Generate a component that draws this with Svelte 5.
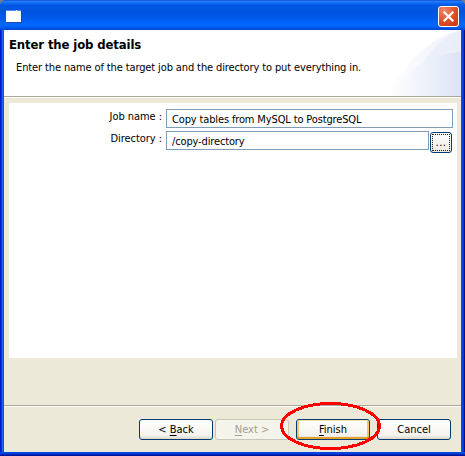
<script>
  let jobName = $state('Copy tables from MySQL to PostgreSQL');
  let directory = $state('/copy-directory');
</script>

<div class="window">
  <div class="titlebar">
    <svg class="app" width="16" height="13" viewBox="0 0 16 13">
      <rect x="1" y="1" width="15" height="12" fill="#1c3f91" opacity=".65" />
      <rect width="15" height="12" fill="#fff" />
      <rect width="15" height="1" fill="#3e91ff" />
      <rect x="10" width="1" height="1" fill="#fff" /><rect x="13" width="1" height="1" fill="#e87850" />
    </svg>
    <button class="close" aria-label="Close">
      <svg width="21" height="21" viewBox="0 0 21 21">
        <defs><radialGradient id="red" cx=".3" cy=".2" r="1"><stop stop-color="#ef8869" /><stop offset=".55" stop-color="#df4d27" /><stop offset="1" stop-color="#c33811" /></radialGradient></defs>
        <rect x=".5" y=".5" width="20" height="20" rx="2.5" fill="url(#red)" stroke="#fff" />
        <path d="M5.7 5.7L15.3 15.3M15.3 5.7L5.7 15.3" stroke="#fff" stroke-width="2.2" />
      </svg>
    </button>
  </div>
  <div class="body">
    <header>
      <div class="heading">
        <h1>Enter the job details</h1>
        <p>Enter the name of the target job and the directory to put everything in.</p>
      </div>
      <svg class="banner" width="77" height="66" viewBox="0 0 77 66">
        <defs>
          <linearGradient id="arc1" x1="0" x2="1"><stop stop-color="#fff" /><stop offset=".4" stop-color="#f8f9fd" /><stop offset="1" stop-color="#eef1fa" /></linearGradient>
          <linearGradient id="arc2" x1="0" x2="1"><stop stop-color="#fff" /><stop offset=".4" stop-color="#f1f4fb" /><stop offset="1" stop-color="#dce3f5" /></linearGradient>
        </defs>
        <path d="M3 66C20 34 43 9 77 0V66Z" fill="url(#arc1)" />
        <path d="M38 36C46 20 60 5 77 1V22C61 24 48 29 38 36Z" fill="#e8edf8" opacity=".7" />
        <path d="M6 66C20 42 46 23 77 22V66Z" fill="url(#arc2)" />
      </svg>
    </header>
    <div class="rule"></div>
    <main>
      <div class="row">
        <label for="job">Job name :</label>
        <input id="job" bind:value={jobName} />
      </div>
      <div class="row second">
        <label for="dir">Directory :</label>
        <input id="dir" class="short" bind:value={directory} />
        <button class="browse"><span>...</span></button>
      </div>
    </main>
    <div class="rule"></div>
    <footer>
      <button class="btn">&lt; <u>B</u>ack</button>
      <button class="btn next" disabled><u>N</u>ext &gt;</button>
      <button class="btn finish"><u>F</u>inish</button>
      <button class="btn">Cancel</button>
    </footer>
  </div>
  <svg class="mark" width="102" height="50" viewBox="0 0 102 50">
    <ellipse cx="50.5" cy="25" rx="49" ry="22.5" fill="none" stroke="#f00" stroke-width="3" shape-rendering="crispEdges" />
  </svg>
</div>

<style>
  :global(body) { margin: 0; background: #777b86; }
  * { box-sizing: border-box; }
  .window {
    position: relative;
    display: flex;
    flex-direction: column;
    width: 465px;
    height: 456px;
    overflow: hidden;
    border-radius: 6px 6px 0 0;
    background: linear-gradient(#0050e5, #0048df);
    font: 11px "DejaVu Sans Condensed", "DejaVu Sans", sans-serif;
    color: #000;
  }
  .titlebar {
    flex: none;
    display: flex;
    justify-content: space-between;
    height: 30px;
    padding: 6px 6px 0 6px;
    background: linear-gradient(#0040c5 0, #2a7cf3 1px, #1876fb 2px, #0058e3 5px, #0053df 12px, #005cec 19px, #0068ff 25px, #0060f6 27px, #0043ce 30px);
  }
  .app { margin-top: 4px; }
  button { font: inherit; color: inherit; padding: 0; margin: 0; }
  .close { width: 21px; height: 21px; border: 0; background: none; }
  .close svg { display: block; }
  .body {
    flex: 1;
    display: flex;
    flex-direction: column;
    padding: 0 4px 4px;
    background:
      linear-gradient(to bottom, #0046e5, #0040dc 2px, #0013a0 3px, #00138c) bottom / 100% 4px no-repeat,
      linear-gradient(to right, #0019cf 1px, #0831d9 1px, #0831d9 2px, #166aee 2px, #166aee 3px, #0855dd 3px) left / 4px 100% no-repeat,
      linear-gradient(to right, #0855dd 1px, #0046e5 1px, #0034d5 3px, #00138c 3px) right / 4px 100% no-repeat,
      #ece9d8;
  }
  header { flex: none; display: flex; justify-content: space-between; height: 66px; background: #fff; }
  .heading { padding: 7px 0 0 5px; white-space: nowrap; }
  h1 { margin: 0; font: bold 13px/15px "DejaVu Sans Condensed", sans-serif; letter-spacing: -.13px; }
  p { margin: 9px 0 0 7px; line-height: 13px; letter-spacing: -.12px; }
  .banner { flex: none; }
  .rule { flex: none; height: 2px; border-top: 1px solid #aca899; background: #fff; }
  main { flex: none; height: 255px; margin: 5px 4px 47px 5px; background: #fff; padding: 6px 4px 0 0; }
  .row { display: flex; height: 19px; }
  .second { margin-top: 3px; height: 21px; }
  label { width: 153px; margin-right: 4px; text-align: right; line-height: 15px; letter-spacing: -.05px; }
  input {
    width: 287px; height: 19px; padding: 1px 0 0 5px; border: 1px solid #7f9db9;
    border-radius: 0; background: #fff; color: #000; font: inherit; letter-spacing: -.14px; outline: 0;
  }
  .short { width: 263px; }
  .browse {
    width: 22px; height: 21px; margin: 1px 0 0 1px; padding: 1px;
    border: 1px solid #003c74; border-radius: 3px; background: linear-gradient(#fff, #ece9e0);
  }
  .browse span { display: block; height: 17px; border: 1px dotted #222; line-height: 16px; letter-spacing: .5px; }
  footer { flex: 1; display: flex; padding: 12px 0 0 135px; }
  .btn {
    width: 74px; height: 21px; border: 1px solid #003c74; border-radius: 3px;
    background: linear-gradient(#fff, #f4f3ee 80%, #dcd7cb); line-height: 20px;
  }
  u { text-underline-offset: 2px; text-decoration-thickness: 1px; }
  .next { margin: 0 7px 0 2px; border-color: #c9c7ba; background: #f5f4ea; color: #a1a192; }
  .finish { margin-right: 7px; box-shadow: inset 0 1px #ffe3a0, inset 0 -2px #e5a02c, inset 2px 0 #fbc761, inset -2px 0 #fbc761; }
  .mark { position: absolute; left: 280px; top: 401px; pointer-events: none; }
</style>
